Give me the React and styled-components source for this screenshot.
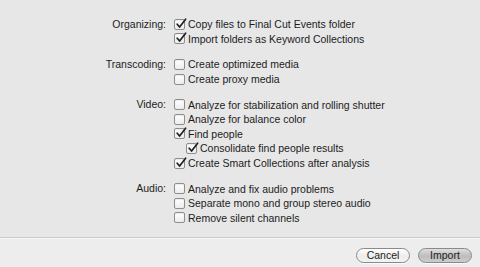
import React from 'react';
import styled, { createGlobalStyle } from 'styled-components';

const GlobalStyle = createGlobalStyle`
  html, body {
    margin: 0;
    padding: 0;
    background: #ececec;
  }
  body {
    font-family: "Liberation Sans", Arial, sans-serif;
    font-size: 10.5px;
    color: #1c1c1c;
  }
`;

const sections = [
  {
    label: 'Organizing:',
    options: [
      { text: 'Copy files to Final Cut Events folder', checked: true },
      { text: 'Import folders as Keyword Collections', checked: true },
    ],
  },
  {
    label: 'Transcoding:',
    options: [
      { text: 'Create optimized media' },
      { text: 'Create proxy media' },
    ],
  },
  {
    label: 'Video:',
    options: [
      { text: 'Analyze for stabilization and rolling shutter' },
      { text: 'Analyze for balance color' },
      { text: 'Find people', checked: true },
      { text: 'Consolidate find people results', checked: true, indent: true },
      { text: 'Create Smart Collections after analysis', checked: true },
    ],
  },
  {
    label: 'Audio:',
    options: [
      { text: 'Analyze and fix audio problems' },
      { text: 'Separate mono and group stereo audio' },
      { text: 'Remove silent channels' },
    ],
  },
];

const Checkbox = ({ checked }) => (
  <Box>
    {checked && (
      <Tick width="12" height="12" viewBox="0 0 12 12">
        <path d="M2.2 6.2 L4.6 9 L10.6 1.2" fill="none" stroke="#1f1f1f" strokeWidth="1.7" strokeLinecap="round" strokeLinejoin="round" />
      </Tick>
    )}
  </Box>
);

const App = () => (
  <>
    <GlobalStyle />
    <Dialog>
      <Body>
        {sections.map((s) => (
          <Section key={s.label}>
            <Label>{s.label}</Label>
            <Options>
              {s.options.map((o) => (
                <Option key={o.text} $indent={o.indent}>
                  <Checkbox checked={o.checked} />
                  <span>{o.text}</span>
                </Option>
              ))}
            </Options>
          </Section>
        ))}
      </Body>
      <Footer>
        <Button>Cancel</Button>
        <Button $primary>Import</Button>
      </Footer>
    </Dialog>
  </>
);

const Dialog = styled.div`
  width: 480px;
  height: 267px;
  display: flex;
  flex-direction: column;
  overflow: hidden;
`;

const Body = styled.div`
  height: 220px;
  padding-top: 17px;
  background: #e7e7e7;
  border-bottom: 1px solid #cacaca;
  display: flex;
  flex-direction: column;
  gap: 11px;
`;

const Section = styled.div`
  display: grid;
  grid-template-columns: 166px 1fr;
  column-gap: 8px;
`;

const Label = styled.div`
  text-align: right;
  line-height: 14.6px;
  white-space: nowrap;
`;

const Options = styled.div`
  display: flex;
  flex-direction: column;
`;

const Option = styled.div`
  display: flex;
  align-items: center;
  gap: 3px;
  height: 14.6px;
  padding-left: ${(p) => (p.$indent ? '12px' : '0')};
  white-space: nowrap;
`;

const Box = styled.div`
  position: relative;
  flex: none;
  width: 9px;
  height: 9px;
  border: 1px solid #8d8d8d;
  border-radius: 2px;
  background: linear-gradient(#ffffff, #ececec);
  box-shadow: inset 0 1px 1px rgba(0, 0, 0, 0.08);
`;

const Tick = styled.svg`
  position: absolute;
  left: 0;
  top: -2px;
`;

const Footer = styled.div`
  flex: 1;
  display: flex;
  justify-content: flex-end;
  align-items: center;
  gap: 8px;
  padding: 5px 8px 0 0;
  background: #ededed;
  border-top: 1px solid #f7f7f7;
`;

const Button = styled.button`
  width: 54px;
  height: 15px;
  padding: 0;
  border: 1px solid #8a8a8a;
  border-radius: 8px;
  font-family: "Liberation Sans", Arial, sans-serif;
  font-size: 10.5px;
  color: #1c1c1c;
  line-height: 13px;
  background: ${(p) =>
    p.$primary
      ? 'linear-gradient(#dedede, #bdbdbd 55%, #cdcdcd)'
      : 'linear-gradient(#ffffff, #ececec 55%, #f4f4f4)'};
  box-shadow: 0 1px 0 rgba(255, 255, 255, 0.7);
`;

export default App;
